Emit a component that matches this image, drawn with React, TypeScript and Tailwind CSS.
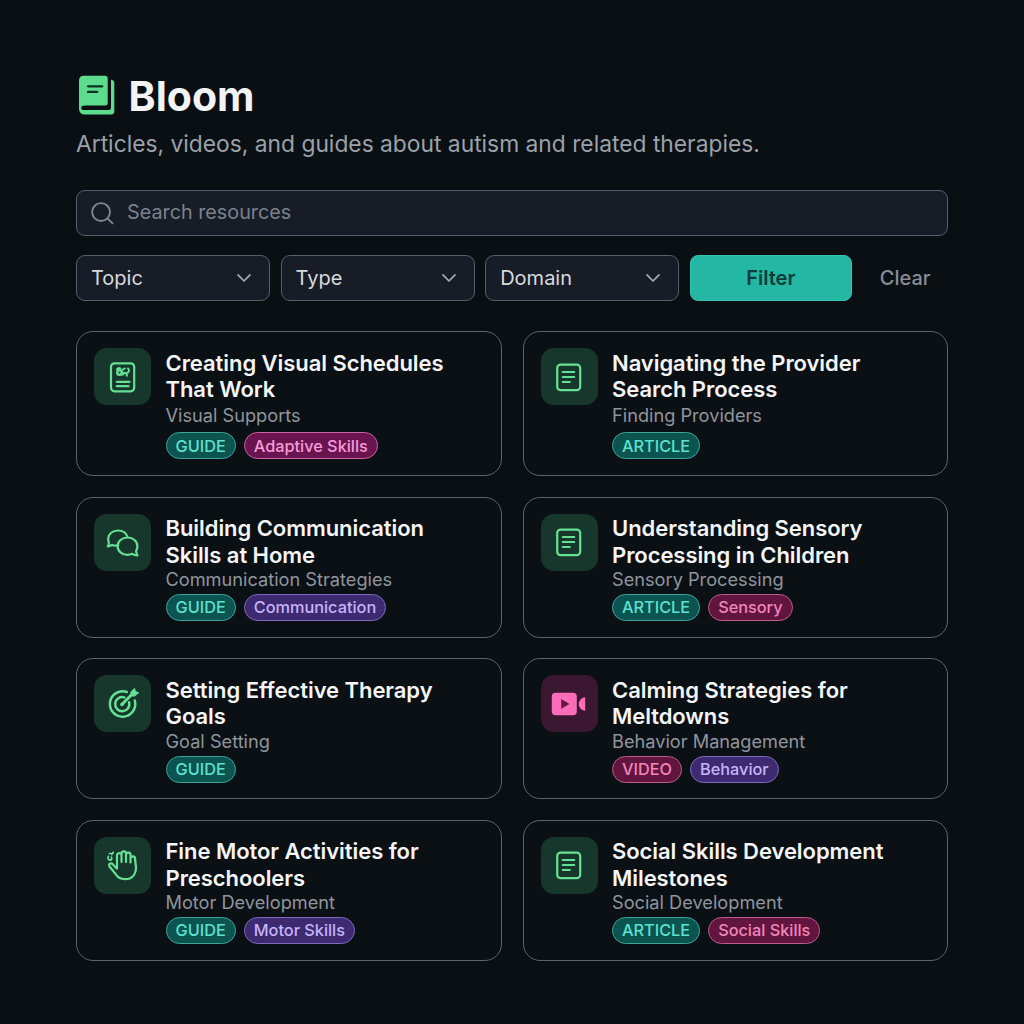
import { useState } from "react"
import type { ReactNode } from "react"

type Tone = "teal" | "pink" | "rose" | "violet"

interface Resource {
  title: string[]
  category: string
  icon: ReactNode
  pinkTile?: boolean
  badges: { label: string; tone: Tone }[]
}

const badgeTones: Record<Tone, string> = {
  teal: "bg-[#0b5450] border-[#3fa39a] text-[#5ee0cf]",
  pink: "bg-[#6a1450] border-[#c8659f] text-[#f79ad8]",
  rose: "bg-[#62163f] border-[#bb5c8a] text-[#f285ba]",
  violet: "bg-[#3d2a70] border-[#7c6bbd] text-[#c6b4fb]",
}

function LogoIcon() {
  return (
    <svg width="40" height="44" viewBox="0 0 40 44" className="shrink-0">
      <path
        fill="#5bdd8d"
        d="M7.5 2.7H29a2.7 2.7 0 0 1 2.7 2.7V30a2.5 2.5 0 0 1-2.5 2.5H9.5c-3 0-4.300.7-4.300 2.500 0 1.700 1.300 2 3 2H32.500a2.500 2.500 0 0 0 2.500-2.500V6.800q3.300.4 3.300 3V38.300a3.200 3.200 0 0 1-3.200 3.200H8.500a5.500 5.500 0 0 1-5.500-5.500V7.200a4.500 4.500 0 0 1 4.500-4.500Z"
      />
      <path d="M12 13.300H26.300M12 18.900H21.300" stroke="#0b3420" strokeWidth="2.200" strokeLinecap="round" />
    </svg>
  )
}

function Glyph({ children }: { children: ReactNode }) {
  return (
    <svg
      width="40"
      height="40"
      viewBox="0 0 40 40"
      fill="none"
      stroke="#65e094"
      strokeWidth="2.200"
      strokeLinecap="round"
      strokeLinejoin="round"
      className="-translate-x-[0.500px]"
    >
      {children}
    </svg>
  )
}

const articleIcon = (
  <Glyph>
    <rect x="8.700" y="7.600" width="23" height="25.600" rx="3.500" />
    <path d="M14.300 15H25.700M14.300 20H25.700M14.300 25H21.300" />
  </Glyph>
)

const scheduleIcon = (
  <Glyph>
    <rect x="8.500" y="6.300" width="23.200" height="28" rx="3.500" />
    <path d="M14.300 24.800H27M14.300 29.200H26" />
    <circle cx="17" cy="15.500" r="2.300" strokeWidth="2.400" />
    <path
      d="M14.500 12.300c.8-1.200 2.200-1.500 3.500-.7M19 17.300l1.800.2M20.300 12.700l2-1.200M21 16.200c1.200-.8 2.200-.5 2.800.5l.7 2M25.500 11.500c1.700 1.500 1.200 3.800-1.200 4.500"
      strokeWidth="2"
    />
  </Glyph>
)

const chatIcon = (
  <Glyph>
    <path d="M15.800 23.200c-2 .5-4.500.4-6.200-.3-1.300.9-2.800 1.500-4.300 1.500.9-1.300 1.200-2.600 1-4a8.700 8.700 0 0 1-.6-3.900c.3-4.600 4.500-8 9.600-8 4.600 0 8.300 2.300 9.600 6" />
    <path d="M25 15.500c5.600 0 9.900 3.800 9.900 8.700 0 2-.5 3.500-1.300 4.800.1 1.600.5 2.900 1.400 4.300-2 .1-3.800-.4-5.300-1.500-1.400.7-3 1-4.700 1-5.600 0-9.900-3.800-9.900-8.600s4.300-8.700 9.900-8.700Z" />
  </Glyph>
)

const targetIcon = (
  <Glyph>
    <path d="M24.300 8A12.700 12.700 0 1 0 32.300 16.500M21.800 13.400A7.100 7.100 0 1 0 26.600 18.300" strokeWidth="2.500" />
    <path d="M19.600 20.300 29.500 10.300" strokeWidth="3" />
    <path d="M28.500 11V8.300l3.600-3.500.8 3 3 .8-3.800 3.300h-3" fill="#65e094" strokeWidth="1.200" />
    <circle cx="19.500" cy="20.400" r="1.800" fill="#65e094" stroke="none" />
  </Glyph>
)

const handIcon = (
  <Glyph>
    <path d="M14.500 20.500V10.300c0-2.800 4.500-2.800 4.500 0v6.700-8.300c0-3.100 4.500-3.100 4.500 0v8.300-7.300c0-2.900 4.500-2.900 4.500 0v7.800-4c0-2.900 4.500-2.900 4.500 0l1 8.500c0 7-3.700 12.200-11 12.200-4.600 0-7.800-2.200-9.800-5.700L7 21.500c-1.300-2.500 1.500-4.200 3.300-2.300 1.400 1.500 2.300 3.300 4.200 4.300v-3" />
    <path d="M5.900 11.300c-1 2 0 3.800 1.600 3.800 1.700 0 2.300-1.700 1.300-3M7 8.500h1.500M10.800 7.300l-1.500 2.200" strokeWidth="1.700" />
  </Glyph>
)

const videoIcon = (
  <svg width="40" height="40" viewBox="0 0 40 40" fill="#fb6db9" className="-translate-x-[0.500px]">
    <rect x="3.300" y="8.700" width="25" height="22.600" rx="3.700" />
    <path d="M36.700 13.200V27c-4-.6-6.400-3.500-6.400-6.900s2.400-6.300 6.400-6.900Z" />
    <path d="M12.700 15v9.800l8.300-4.900Z" fill="#65193f" />
  </svg>
)

const resources: Resource[] = [
  {
    title: ["Creating Visual Schedules", "That Work"],
    category: "Visual Supports",
    icon: scheduleIcon,
    badges: [{ label: "GUIDE", tone: "teal" }, { label: "Adaptive Skills", tone: "pink" }],
  },
  {
    title: ["Navigating the Provider", "Search Process"],
    category: "Finding Providers",
    icon: articleIcon,
    badges: [{ label: "ARTICLE", tone: "teal" }],
  },
  {
    title: ["Building Communication", "Skills at Home"],
    category: "Communication Strategies",
    icon: chatIcon,
    badges: [{ label: "GUIDE", tone: "teal" }, { label: "Communication", tone: "violet" }],
  },
  {
    title: ["Understanding Sensory", "Processing in Children"],
    category: "Sensory Processing",
    icon: articleIcon,
    badges: [{ label: "ARTICLE", tone: "teal" }, { label: "Sensory", tone: "rose" }],
  },
  {
    title: ["Setting Effective Therapy", "Goals"],
    category: "Goal Setting",
    icon: targetIcon,
    badges: [{ label: "GUIDE", tone: "teal" }],
  },
  {
    title: ["Calming Strategies for", "Meltdowns"],
    category: "Behavior Management",
    icon: videoIcon,
    pinkTile: true,
    badges: [{ label: "VIDEO", tone: "rose" }, { label: "Behavior", tone: "violet" }],
  },
  {
    title: ["Fine Motor Activities for", "Preschoolers"],
    category: "Motor Development",
    icon: handIcon,
    badges: [{ label: "GUIDE", tone: "teal" }, { label: "Motor Skills", tone: "violet" }],
  },
  {
    title: ["Social Skills Development", "Milestones"],
    category: "Social Development",
    icon: articleIcon,
    badges: [{ label: "ARTICLE", tone: "teal" }, { label: "Social Skills", tone: "rose" }],
  },
]

function SelectButton({ label }: { label: string }) {
  return (
    <button className="flex h-[46px] w-[194px] items-center justify-between rounded-[9px] border border-[#56606c] bg-[#181c27] pr-[17px] pl-[14px] text-[20px] text-[#d8dadd]">
      {label}
      <svg width="16" height="10" viewBox="0 0 16 10" fill="none" stroke="#a4abb4" strokeWidth="1.700" strokeLinecap="round" strokeLinejoin="round">
        <path d="M2 1.800 8 8l6-6.200" />
      </svg>
    </button>
  )
}

function ResourceCard({ resource, tall }: { resource: Resource; tall: boolean }) {
  return (
    <div
      className={`flex items-start rounded-[17px] border border-[#5a6570] bg-[#0b1015] pt-[16px] pl-[17px] ${
        tall ? "h-[145px]" : "h-[141px]"
      }`}
    >
      <div
        className={`flex size-[57px] shrink-0 items-center justify-center rounded-[13px] ${
          resource.pinkTile ? "bg-[#3c1732]" : "bg-[#17372c]"
        }`}
      >
        {resource.icon}
      </div>
      <div className="ml-[14.500px] whitespace-nowrap">
        <h2 className="mt-[1.500px] text-[22px] leading-[26.400px] font-semibold tracking-[-0.060px] text-[#f4f5f6]">
          {resource.title[0]}
          <br />
          {resource.title[1]}
        </h2>
        <p className={`text-[18.200px] leading-[24px] text-[#8f959d] ${tall ? "mt-[1px]" : "-mt-[1px]"}`}>
          {resource.category}
        </p>
        <div className={`flex gap-2 ${tall ? "mt-[5px]" : "mt-[3px]"}`}>
          {resource.badges.map((badge) => (
            <span
              key={badge.label}
              className={`flex h-[27px] items-center rounded-full border px-[9px] text-[16.300px] font-medium ${badgeTones[badge.tone]}`}
            >
              {badge.label}
            </span>
          ))}
        </div>
      </div>
    </div>
  )
}

export default function App() {
  const [query, setQuery] = useState("")

  return (
    <div className="h-[1024px] w-[1024px] overflow-hidden bg-[#0a0f14] px-[76px] pt-[73px] font-['Inter',sans-serif]">
      <header>
        <div className="flex h-[44px] items-center gap-[12.500px]">
          <LogoIcon />
          <h1 className="pt-[2px] text-[41px] leading-[44px] font-bold text-[#f2f3f4]">Bloom</h1>
        </div>
        <p className="mt-[13px] text-[22.800px] leading-[28px] whitespace-nowrap text-[#9ba1a9]">
          Articles, videos, and guides about autism and related therapies.
        </p>
      </header>

      <div className="mt-[32px] flex h-[46px] items-center rounded-[9px] border border-[#56606c] bg-[#181c27] pl-[13px]">
        <svg width="25" height="25" viewBox="0 0 26 26" fill="none" stroke="#808892" strokeWidth="1.900" strokeLinecap="round">
          <circle cx="11.500" cy="11.500" r="9.300" />
          <path d="m18.300 18.300 5.200 5" />
        </svg>
        <input
          value={query}
          onChange={(e) => setQuery(e.target.value)}
          placeholder="Search resources"
          className="ml-[12px] w-[700px] bg-transparent text-[19.800px] text-[#d8dadd] outline-none placeholder:text-[#7b828c]"
        />
      </div>

      <div className="mt-[18.500px] flex gap-[10.600px]">
        <SelectButton label="Topic" />
        <SelectButton label="Type" />
        <SelectButton label="Domain" />
        <button className="h-[46px] w-[162px] rounded-[8px] border border-[#34c3ae] bg-[#23b7a4] text-[20px] font-semibold text-[#0c3c3a]">
          Filter
        </button>
        <button className="h-[46px] flex-1 text-[20px] font-medium text-[#878d98]">Clear</button>
      </div>

      <main className="mt-[30.500px] grid grid-cols-2 gap-x-[21px] gap-y-[20.600px]">
        {resources.map((resource, i) => (
          <ResourceCard key={resource.category} resource={resource} tall={i < 2} />
        ))}
      </main>
    </div>
  )
}
